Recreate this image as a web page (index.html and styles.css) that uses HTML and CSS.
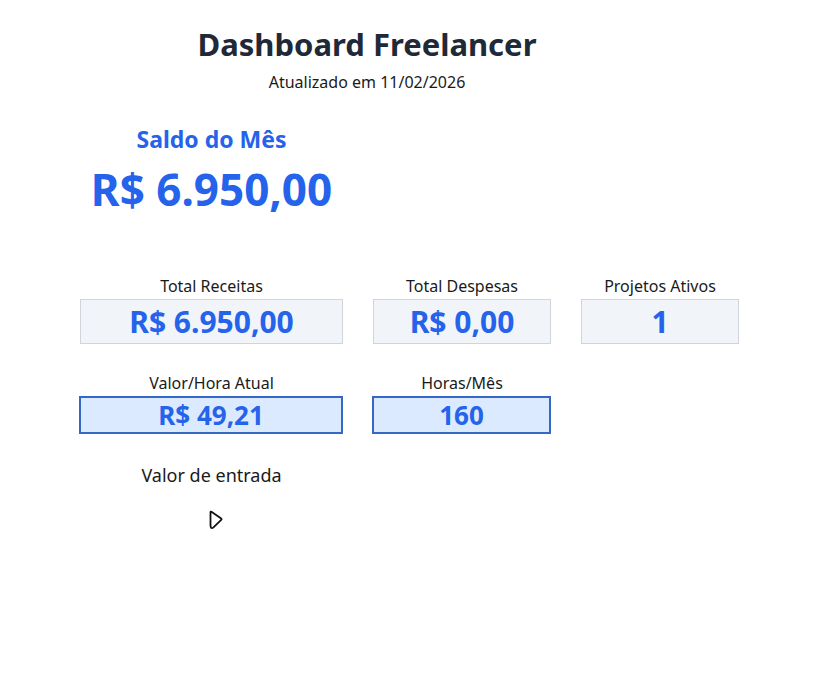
FILE: index.html
```html
<!DOCTYPE html>
<html lang="pt-BR">
<head>
    <meta charset="UTF-8">
    <meta name="viewport" content="width=device-width, initial-scale=1.0">
    <title>Dashboard Freelancer</title>
    <link rel="stylesheet" href="styles.css">
</head>
<body>

    <!-- Header -->
    <div class="header">
        <h1>Dashboard Freelancer</h1>
        <p class="updated">Atualizado em 11/02/2026</p>
    </div>

    <!-- Saldo -->
    <div class="saldo">
        <h2>Saldo do Mês</h2>
        <div class="saldo-value">R$ 6.950,00</div>
    </div>

    <!-- Cards -->
    <div class="cards">
        <div class="card">
            <div class="label">Total Receitas</div>
            <div class="box">R$ 6.950,00</div>
        </div>
        <div class="card">
            <div class="label">Total Despesas</div>
            <div class="box">R$ 0,00</div>
        </div>
        <div class="card">
            <div class="label">Projetos Ativos</div>
            <div class="box">1</div>
        </div>

        <div class="card row2">
            <div class="label">Valor/Hora Atual</div>
            <div class="box input">R$ 49,21</div>
        </div>
        <div class="card row2">
            <div class="label">Horas/Mês</div>
            <div class="box input">160</div>
        </div>
    </div>

    <div class="entry">
        <div class="entry-label">Valor de entrada</div>
        <svg class="pointer" width="16" height="20" viewBox="0 0 16 20">
            <path d="M2.5 2.2 Q2.5 1.2 3.4 1.8 L13.2 8.6 Q14 9.2 13.2 9.8 L5.2 17.6 Q3.6 18.8 3 17.6 Q2.5 16.5 2.5 15 Z"
                  fill="#fff" stroke="#111" stroke-width="1.8" stroke-linejoin="round"/>
        </svg>
    </div>

</body>
</html>
```

FILE: styles.css
```css
body {
    margin: 0;
    background: #fff;
    font-family: "Noto Sans", "Open Sans", sans-serif;
    color: #1a1a1a;
}
.header {
    width: 734px;
    text-align: center;
    padding-top: 22px;
}
.header h1 {
    font-size: 31px;
    font-weight: 700;
    color: #1f2937;
    margin: 0;
    line-height: 44px;
}
.updated {
    font-size: 16px;
    margin: 5px 0 0;
    line-height: 22px;
}
.saldo {
    width: 263px;
    margin-left: 80px;
    margin-top: 31px;
    text-align: center;
    color: #2563eb;
}
.saldo h2 {
    font-size: 23px;
    font-weight: 700;
    margin: 0;
    line-height: 30px;
}
.saldo-value {
    font-size: 44px;
    font-weight: 700;
    line-height: 60px;
    margin-top: 5px;
}
.cards {
    display: grid;
    grid-template-columns: 263px 178px 158px;
    column-gap: 30px;
    row-gap: 29px;
    margin-left: 80px;
    margin-top: 57px;
}
.card {
    text-align: center;
}
.label {
    font-size: 16px;
    line-height: 20px;
    margin-bottom: 3px;
}
.box {
    box-sizing: border-box;
    height: 45px;
    line-height: 43px;
    background: #f1f5f9;
    border: 1px solid #d1d5db;
    color: #2563eb;
    font-size: 30px;
    font-weight: 700;
}
.row2 .label {
    margin-bottom: 3px;
}
.box.input {
    height: 38px;
    line-height: 34px;
    margin-left: -1px;
    background: #dbeafe;
    border: 2px solid #3567c4;
    font-size: 26px;
}
.entry {
    width: 263px;
    margin-left: 80px;
    margin-top: 29px;
    text-align: center;
}
.entry-label {
    font-size: 18px;
    line-height: 24px;
}
.pointer {
    display: block;
    margin: 23px 0 0 128px;
}
```
